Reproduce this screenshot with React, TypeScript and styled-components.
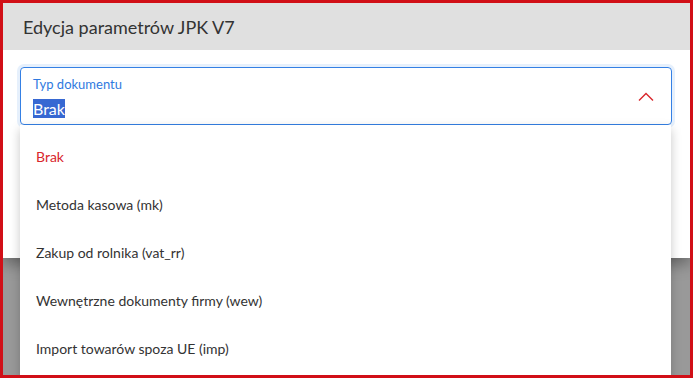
import React from 'react'
import styled, { createGlobalStyle } from 'styled-components'

const GlobalStyle = createGlobalStyle`
  html, body {
    margin: 0;
    padding: 0;
  }
  body {
    font-family: Lato, "Liberation Sans", sans-serif;
    color: #333;
  }
`

const options = [
  'Brak',
  'Metoda kasowa (mk)',
  'Zakup od rolnika (vat_rr)',
  'Wewnętrzne dokumenty firmy (wew)',
  'Import towarów spoza UE (imp)',
]

export default function App() {
  const selected = 'Brak'

  return (
    <>
      <GlobalStyle />
      <Frame>
        <Dialog>
          <Header>Edycja parametrów JPK V7</Header>
          <Body>
            <SelectWrap>
              <Field>
                <FieldText>
                  <Label>Typ dokumentu</Label>
                  <Value>
                    <Highlight>{selected}</Highlight>
                  </Value>
                </FieldText>
                <Chevron width="16" height="10" viewBox="0 0 16 10">
                  <polyline points="1,8.5 8,1.5 15,8.5" fill="none" stroke="#d9262c" strokeWidth="1.4" />
                </Chevron>
              </Field>
              <Menu>
                {options.map((o) => (
                  <Item key={o} active={o === selected}>
                    {o}
                  </Item>
                ))}
              </Menu>
            </SelectWrap>
          </Body>
        </Dialog>
      </Frame>
    </>
  )
}

const Frame = styled.div`
  height: 378px;
  box-sizing: border-box;
  border: 3px solid #d10f17;
  background: #999;
  overflow: hidden;
`
const Dialog = styled.div`
  background: #fff;
  box-shadow: 0 6px 14px rgba(0, 0, 0, 0.35);
`
const Header = styled.div`
  height: 47px;
  display: flex;
  align-items: center;
  padding: 1px 20px 0;
  box-sizing: border-box;
  background: #e0e0e0;
  font-size: 18px;
  color: #333;
`
const Body = styled.div`
  height: 208px;
  box-sizing: border-box;
  padding: 17px 18px 0 17px;
`
const SelectWrap = styled.div`
  position: relative;
`
const Field = styled.div`
  height: 58px;
  box-sizing: border-box;
  display: flex;
  align-items: center;
  padding: 0 17px 0 12px;
  border: 1px solid #3580e4;
  border-radius: 4px;
  box-shadow: 0 0 0 3px rgba(53, 128, 228, 0.12);
`
const FieldText = styled.div`
  flex: 1;
  display: flex;
  flex-direction: column;
  gap: 8px;
  padding-top: 1px;
`
const Label = styled.div`
  font-size: 13px;
  line-height: 16px;
  color: #2f7ae0;
`
const Value = styled.div`
  font-size: 16px;
  line-height: 18px;
  color: #333;
`
const Highlight = styled.span`
  background: #3768d2;
  color: #fff;
`
const Chevron = styled.svg`
  display: block;
  margin-top: 2px;
`
const Menu = styled.div`
  position: absolute;
  top: 100%;
  left: 0;
  right: 1px;
  padding: 7px 0 8px;
  background: #fff;
  box-shadow: 0 4px 10px rgba(0, 0, 0, 0.22);
`
const Item = styled.div<{ active?: boolean }>`
  height: 48px;
  display: flex;
  align-items: center;
  padding: 0 16px;
  font-size: 14px;
  color: ${(p) => (p.active ? '#d9262c' : '#333')};
`
